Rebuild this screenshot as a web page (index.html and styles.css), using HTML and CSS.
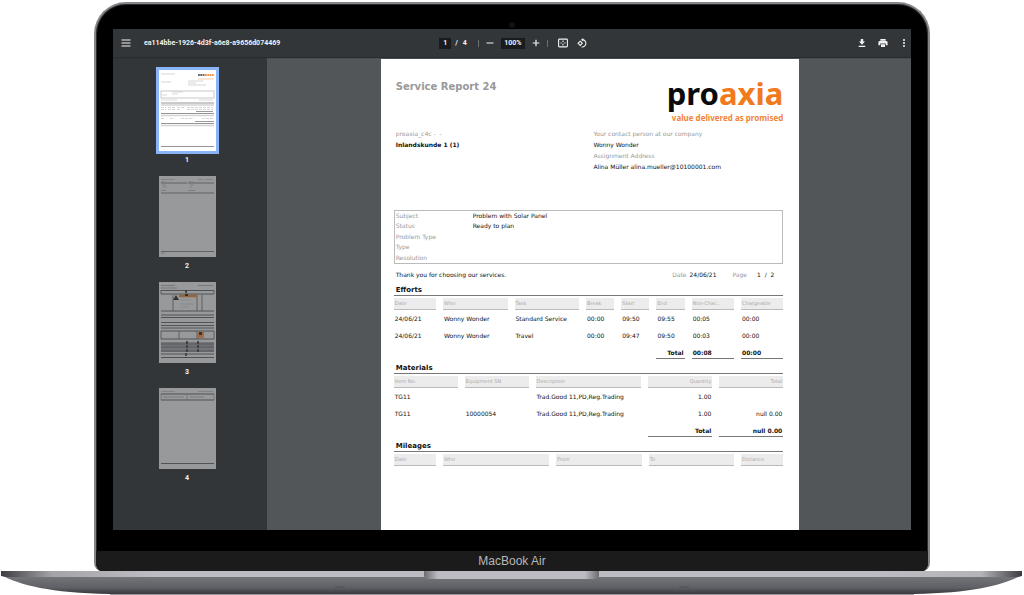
FILE: index.html
```html
<!DOCTYPE html>
<html lang="en">
<head>
<meta charset="utf-8">
<title>Service Report 24</title>
<link rel="stylesheet" href="styles.css">
</head>
<body>
<div class="laptop">
  <div class="lid">
    <div class="camera"></div>
    <main class="screen">
      <header class="toolbar">
        <div class="bar-left">
          <button class="icon-btn" aria-label="Menu"><svg width="10" height="10" viewBox="0 0 10 10"><path d="M.5 2h9M.5 5h9M.5 8h9" stroke="currentColor" stroke-width="1.2"/></svg></button>
          <span class="file-name">ea114bbe-1926-4d3f-a6e8-a9656d074469</span>
        </div>
        <div class="bar-center">
          <div class="pager"><input class="field page-field" aria-label="Page number" value="1"><span>/</span><span>4</span></div>
          <i class="sep"></i>
          <div class="zoomer">
            <button class="icon-btn" aria-label="Zoom out"><svg width="8" height="8" viewBox="0 0 8 8"><path d="M.5 4h7" stroke="currentColor" stroke-width="1.2"/></svg></button>
            <input class="field zoom-field" aria-label="Zoom" value="100%">
            <button class="icon-btn" aria-label="Zoom in"><svg width="8" height="8" viewBox="0 0 8 8"><path d="M.7 4h6.6M4 .7v6.6" stroke="currentColor" stroke-width="1.2"/></svg></button>
          </div>
          <i class="sep"></i>
          <div class="fitter">
            <button class="icon-btn" aria-label="Fit to page"><svg width="10" height="10" viewBox="0 0 10 10" fill="none" stroke="currentColor"><rect x=".6" y="1.1" width="8.8" height="7.8" rx=".8" stroke-width="1.1"/><path d="M5 2.4v1.800M5 5.800v1.800M2.500 5h1.200M6.300 5h1.200" stroke-width="1.1"/></svg></button>
            <button class="icon-btn" aria-label="Rotate"><svg width="10" height="10" viewBox="0 0 10 10" fill="none" stroke="currentColor" stroke-width="1.1"><path d="M4.6 1.7A3.7 3.7 0 1 1 4.6 9"/><path d="M3.2 3.2 5.3 5.3 3.2 7.4 1.1 5.3Z"/><path d="M6.2 0v3.4L4.2 1.7Z" fill="currentColor" stroke="none"/></svg></button>
          </div>
        </div>
        <div class="bar-right">
          <button class="icon-btn" aria-label="Download"><svg width="10" height="10" viewBox="0 0 10 10" fill="currentColor"><path d="M3.8 1h2.4v2.6H8L5 6.8 2 3.6h1.8zM1.7 7.7h6.6v1.2H1.7z"/></svg></button>
          <button class="icon-btn" aria-label="Print"><svg width="10" height="10" viewBox="0 0 10 10" fill="currentColor"><path d="M2.3 1h5.4v1.7H2.3zM1.8 3.1h6.4A1.4 1.4 0 0 1 9.6 4.500v2.800H7.700V5.600H2.300v1.700H.4V4.500A1.400 1.400 0 0 1 1.800 3.100zM3 6.200h4v2.700H3z"/></svg></button>
          <button class="icon-btn" aria-label="More"><svg width="10" height="10" viewBox="0 0 10 10" fill="currentColor"><circle cx="5" cy="2" r="1"/><circle cx="5" cy="5" r="1"/><circle cx="5" cy="8" r="1"/></svg></button>
        </div>
      </header>

      <div class="workspace">
        <nav class="sidebar" aria-label="Pages">
          <button class="thumb">
            <svg class="sheet selected" viewBox="0 0 57 81">
              <rect width="57" height="81" fill="#fff"/>
              <path d="M2 4h14" stroke="#ccc" stroke-width=".8"/>
              <path d="M39 5h7" stroke="#666" stroke-width="2" stroke-dasharray="1.800 .5"/><path d="M46 5h9" stroke="#f0974d" stroke-width="2" stroke-dasharray="1.800 .5"/>
              <path d="M39 9h16" stroke="#f5c39b" stroke-width=".8"/>
              <path d="M2 12h10M29 11h15M29 13h8M29 15h18" stroke="#ccc" stroke-width=".8"/>
              <rect x="2" y="21" width="53" height="7" fill="none" stroke="#bbb" stroke-width=".8"/>
              <path d="M13 22h11M13 24h6M3 25h5M2 30h16M40 30h14" stroke="#ccc" stroke-width=".7"/>
              <path d="M2 33h53M2 43.500h53M2 53.500h53M2 76.500h53" stroke="#888" stroke-width=".9"/>
              <path d="M2 35h53M2 45.500h53M2 55.500h53" stroke="#d4d4d4" stroke-width="1.600"/>
              <path d="M2 37.500h5M9 37.500h7M18 37.500h8M28 37.500h26M2 39.500h5M9 39.500h7M18 39.500h4M28 39.500h26M2 48.500h3M11 48.500h5M22 48.500h13M43 48.500h11" stroke="#ccc" stroke-width=".8" stroke-dasharray="3 1"/>
              <path d="M37 41.500h17M36 51.500h19" stroke="#999"/>
            </svg>
            <span>1</span>
          </button>
          <button class="thumb">
            <svg class="sheet" viewBox="0 0 57 81">
              <rect width="57" height="81" fill="#98999a"/>
              <path d="M2 3.500h14M39 3.500h5M46 3.500h8M3 9h4M4 11h4M31 9h4M30 11h3" stroke="#7d7e80" stroke-width=".8"/>
              <path d="M2 7h26M29 7h26M2 17h53M2 75.500h53" stroke="#606264" stroke-width="1.200"/>
              <path d="M2 14.500h5M29 14.500h7M2 6h4M29 6h5M2 77h4" stroke="#77787a" stroke-width=".8"/>
            </svg>
            <span>2</span>
          </button>
          <button class="thumb">
            <svg class="sheet" viewBox="0 0 57 81">
              <rect width="57" height="81" fill="#98999a"/>
              <path d="M2 3.500h14M39 3.500h15M2 6h16" stroke="#6f7072" stroke-width=".8"/>
              <path d="M2 8.500h53M2 12h53M2 29h53M2 33h53M2 35.500h53M2 40.500h53M2 43.500h53M2 46h53M2 49h53M2 57h53M2 72h53M2 75.500h53" stroke="#505255" stroke-width="1"/>
              <rect x="2" y="60" width="53" height="10" fill="#737477"/>
              <path d="M2 62h53M2 65h53M2 69h53" stroke="#505255" stroke-width=".8"/>
              <path d="M14 13v16M38 13v16M43 13v16M20 49v8M38 49v8M2 8v4M55 8v4M2 49v8M55 49v8" stroke="#505154" stroke-width=".8"/>
              <path d="M20 14h18" stroke="#92663f" stroke-width="2.500"/>
              <path d="M14 18 17 13l3 5zM26 12h3v2h-3z" fill="#36302d"/>
              <path d="M21 18h11M21 22h14M21 25h9" stroke="#85868a" stroke-width=".8"/>
              <path d="M38 50h7v6h-7z" fill="#a06b47"/><path d="M40 50h3v3h-3z" fill="#46322c"/>
              <path d="M28 59v11M39 59v11M27 71v5M27 8v4" stroke="#36383a" stroke-width="1.600" stroke-dasharray="3 1"/>
            </svg>
            <span>3</span>
          </button>
          <button class="thumb">
            <svg class="sheet" viewBox="0 0 57 81">
              <rect width="57" height="81" fill="#98999a"/>
              <path d="M2 3.500h14M39 3.500h15" stroke="#7d7e80" stroke-width=".8"/>
              <path d="M2 6h53M2 12h53M2 75.500h53" stroke="#505255" stroke-width="1.100"/>
              <path d="M2 6v6M28 6v6M55 6v6M4 9h21M31 9h14" stroke="#707174" stroke-width=".8"/>
            </svg>
            <span>4</span>
          </button>
        </nav>

        <div class="viewer">
          <article class="page">
            <header class="page-head">
              <h1>Service Report 24</h1>
              <div class="brand">
                <div class="logo">pro<span>axia</span></div>
                <div class="tagline">value delivered as promised</div>
              </div>
            </header>

            <section class="parties">
              <div><p class="muted">proaxia_c4c -&nbsp; -</p><p><b>Inlandskunde 1 (1)</b></p></div>
              <div>
                <p class="muted">Your contact person at our company</p><p>Wonny Wonder</p>
                <p class="muted">Assignment Address</p><p>Alina Müller alina.mueller@10100001.com</p>
              </div>
            </section>

            <dl class="facts">
              <dt>Subject</dt><dd>Problem with Solar Panel</dd>
              <dt>Status</dt><dd>Ready to plan</dd>
              <dt>Problem Type</dt><dd></dd>
              <dt>Type</dt><dd></dd>
              <dt>Resolution</dt><dd></dd>
            </dl>

            <div class="thanks">
              <p>Thank you for choosing our services.</p>
              <p class="issued"><span class="muted">Date</span><span>24/06/21</span></p>
              <p class="count"><span class="muted">Page</span><span>1 &nbsp;/ &nbsp;2</span></p>
            </div>

            <h2>Efforts</h2>
            <table class="efforts">
              <thead><tr><th>Date</th><th>Who</th><th>Task</th><th>Break</th><th>Start</th><th>End</th><th>Non-Char...</th><th>Chargeable</th></tr></thead>
              <tbody>
                <tr><td>24/06/21</td><td>Wonny Wonder</td><td>Standard Service</td><td>00:00</td><td>09:50</td><td>09:55</td><td>00:05</td><td>00:00</td></tr>
                <tr><td>24/06/21</td><td>Wonny Wonder</td><td>Travel</td><td>00:00</td><td>09:47</td><td>09:50</td><td>00:03</td><td>00:00</td></tr>
              </tbody>
              <tfoot><tr><td></td><td></td><td></td><td></td><td></td><td class="sum num">Total</td><td class="sum">00:08</td><td class="sum">00:00</td></tr></tfoot>
            </table>

            <h2>Materials</h2>
            <table class="materials">
              <thead><tr><th>Item No.</th><th>Equipment SN</th><th>Description</th><th class="num">Quantity</th><th class="num">Total</th></tr></thead>
              <tbody>
                <tr><td>TG11</td><td></td><td>Trad.Good 11,PD,Reg.Trading</td><td class="num">1.00</td><td></td></tr>
                <tr><td>TG11</td><td>10000054</td><td>Trad.Good 11,PD,Reg.Trading</td><td class="num">1.00</td><td class="num">null 0.00</td></tr>
              </tbody>
              <tfoot><tr><td></td><td></td><td></td><td class="sum num">Total</td><td class="sum num">null 0.00</td></tr></tfoot>
            </table>

            <h2>Mileages</h2>
            <table class="mileages">
              <thead><tr><th>Date</th><th>Who</th><th>From</th><th>To</th><th>Distance</th></tr></thead>
            </table>
          </article>
        </div>
      </div>
    </main>
    <div class="chin">MacBook Air</div>
  </div>
  <svg class="base" viewBox="0 0 1024 24" preserveAspectRatio="none" aria-hidden="true">
    <defs>
      <linearGradient id="body" x2="0" y2="1"><stop offset="0" stop-color="#77787c"/><stop offset=".65" stop-color="#606166"/><stop offset="1" stop-color="#38393e"/></linearGradient>
      <linearGradient id="edge"><stop offset="0" stop-color="#3c3d40"/><stop offset=".05" stop-color="#a4a4a8"/><stop offset=".15" stop-color="#bcbcc2"/><stop offset=".85" stop-color="#bcbcc2"/><stop offset=".96" stop-color="#b4b4b9"/><stop offset="1" stop-color="#3c3d40"/></linearGradient>
      <linearGradient id="notch"><stop offset="0" stop-color="#6c6c71"/><stop offset=".08" stop-color="#bbbbc1"/><stop offset=".92" stop-color="#bbbbc1"/><stop offset="1" stop-color="#6c6c71"/></linearGradient>
    </defs>
    <path d="M1 4C20 14 50 22 110 23H914C974 22 1004 14 1022 4Z" fill="url(#body)"/>
    <path d="M1 0H1022V5L1018 6H6L1 5Z" fill="url(#edge)"/>
    <path d="M424 0H599V5Q598 8 594 8H429Q425 8 424 5Z" fill="url(#notch)"/>
    <path d="M110 23.500H914" stroke="#9b9ba0"/>
    <path d="M335 16h10M679 16h10" stroke="#4f5054" stroke-width="1"/>
  </svg>
</div>
</body>
</html>
```
FILE: styles.css
```css
* { box-sizing: border-box; }
body, h1, h2, p, dl, dd { margin: 0; }
body { background: #fff; font-family: "DejaVu Sans", sans-serif; }

.laptop { display: flex; flex-direction: column; height: 100vh; padding-top: 2px; }
.lid {
  flex: 1; min-height: 0; margin: 0 94px; display: flex; flex-direction: column;
  background: #000; border: 2px solid #85868a; border-bottom: 0;
  border-radius: 32px 32px 8px 8px; box-shadow: inset 0 0 0 1px #2b2c2e; overflow: hidden;
}
.camera { flex: none; width: 6px; height: 6px; margin: 18px auto 1px; border-radius: 50%; background: #101114; }
.screen { flex: 1; min-height: 0; margin: 0 17px; display: flex; flex-direction: column; background: #525659; overflow: hidden; }
.chin {
  flex: none; margin-top: 21px; height: 20px; line-height: 21px; background: #1b1b1b; color: #b8b8b8;
  font-family: "Liberation Sans", sans-serif; font-size: 12px; text-align: center;
}
.base { flex: none; display: block; width: 100%; height: 24px; }

.toolbar {
  flex: none; display: grid; grid-template-columns: 1fr auto 1fr; align-items: center; height: 28px; padding: 0 2px 0 8px;
  background: #323639; color: #f1f1f1; font-family: Roboto, sans-serif; font-size: 7px; font-weight: 700;
  box-shadow: 0 1px 1px #292c2e; position: relative;
}
.toolbar > div, .pager, .zoomer, .fitter { display: flex; align-items: center; }
.bar-left { gap: 13px; }
.bar-center { gap: 7px; margin-right: 4px; }
.bar-right { justify-content: flex-end; gap: 11px; }
.pager { gap: 4px; margin-right: 4px; }
.pager span:last-child { margin-left: 1px; }
.zoomer { gap: 7px; }
.fitter { gap: 9px; margin-left: 3px; }
.icon-btn { display: block; padding: 0; border: 0; background: none; color: inherit; }
.icon-btn svg { display: block; }
.field { height: 11px; padding: 0; border: 0; background: #191b1c; color: inherit; font: inherit; text-align: center; }
.page-field { width: 12px; }
.zoom-field { width: 24px; }
.sep { width: 1px; height: 7px; background: #6d7073; }

.workspace { flex: 1; min-height: 0; display: flex; }
.sidebar { flex: none; width: 154px; padding-top: 13px; display: flex; flex-direction: column; align-items: center; gap: 11px; background: #323639; }
.thumb { display: flex; flex-direction: column; gap: 4px; align-items: center; padding: 0; border: 0; background: none; color: #f1f1f1; font: 700 7px/10px Roboto, sans-serif; margin-right: 6px; }
.sheet { display: block; width: 57px; height: 81px; }
.selected { outline: 3px solid #8ab4f8; }
.viewer { flex: 1; min-width: 0; padding-top: 2px; overflow: hidden; display: flex; justify-content: center; align-items: stretch; }

.page { width: 65%; padding: 14px 16px 0 13px; background: #fff; color: #111; font-size: 6px; line-height: 11px; margin-left: 2px; overflow: hidden; }
.muted, dt { color: #999; }
.page-head { display: flex; justify-content: space-between; height: 55px; }
h1 { margin: 7px 0 0 2px; font-size: 10px; line-height: 14px; color: #999; }
.brand { padding-top: 2px; }
.logo { font: 700 31px/36px "Noto Sans", sans-serif; color: #0b0b0b; }
.logo span { color: #f07a1c; }
.tagline { padding-top: 1px; font: 700 8px/12px "Noto Sans", sans-serif; color: #f0853a; text-align: right; }
.parties { display: grid; grid-template-columns: 51% 1fr; padding-left: 2px; margin-bottom: 38px; }
.facts { display: grid; grid-template-columns: 77px 1fr; grid-auto-rows: 1fr; min-height: 54px; padding-left: 1px; border: 1px solid #bbb; line-height: 10px; }
.thanks { display: flex; padding: 5px 9px 1px 2px; }
.thanks .issued { display: flex; gap: 3px; margin-left: auto; }
.thanks .count { display: flex; gap: 10px; margin-left: 16px; }

h2 { padding: 4px 0 0 2px; font-size: 7px; line-height: 10px; border-bottom: 1px solid #777; }
table { display: block; padding-top: 2px; }
tr { display: grid; column-gap: 7px; }
thead, tbody, tfoot { display: block; }
.efforts tr { grid-template-columns: 42fr 64fr 64fr 28fr 28fr 28fr 42fr 42fr; }
.materials tr { grid-template-columns: 64fr 64fr 106fr 64fr 64fr; }
.mileages tr { grid-template-columns: 42fr 106fr 85fr 85fr 42fr; }
th, td { padding: 0 1px; text-align: left; white-space: nowrap; min-width: 0; }
th { height: 12px; background: #ececec; border-bottom: 1px solid #bbb; color: #aaa; font-size: 5px; font-weight: 400; line-height: 11px; }
tbody td { height: 17px; line-height: 17px; }
tfoot td { height: 15px; padding-top: 3px; line-height: 11px; }
.sum { border-bottom: 1px solid #777; font-weight: 700; }
.num { text-align: right; }
```
